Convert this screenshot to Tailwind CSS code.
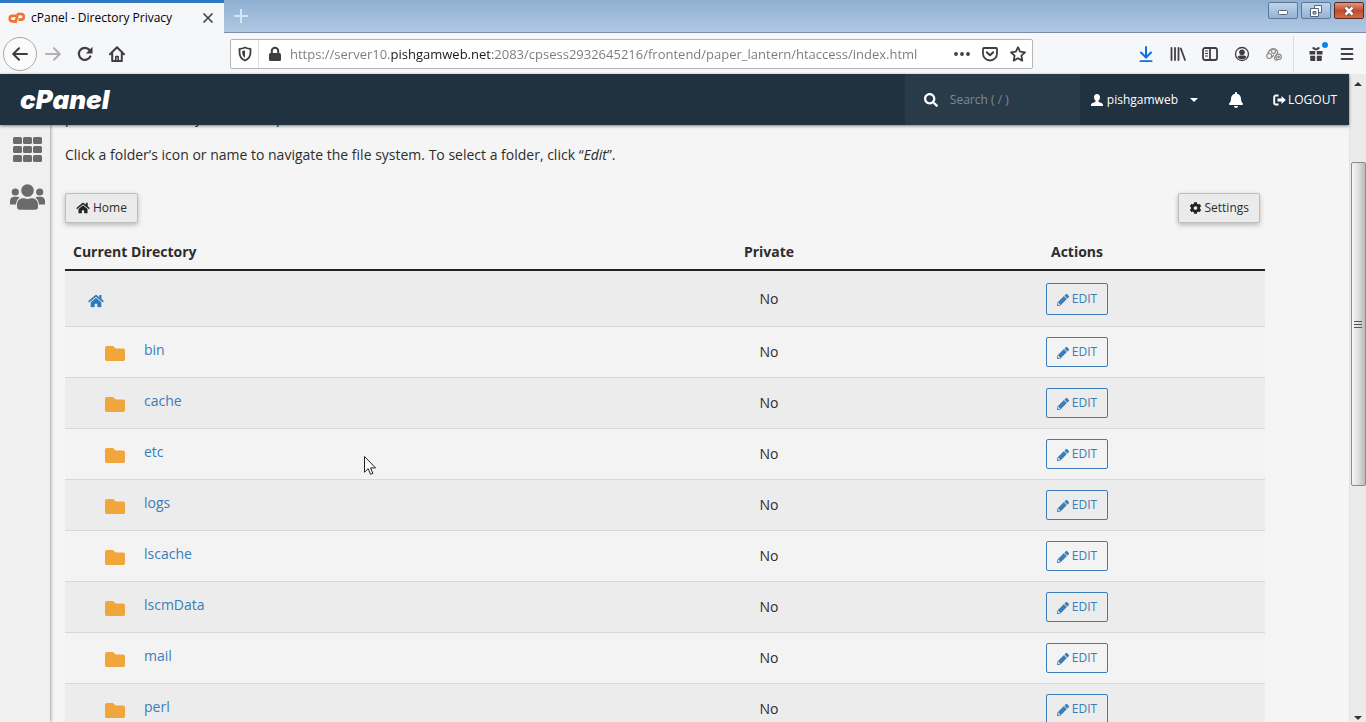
<!DOCTYPE html>
<html lang="en">
<head>
    <meta charset="utf-8">
    <title>cPanel - Directory Privacy</title>
    <script src="https://cdn.jsdelivr.net/npm/@tailwindcss/browser@4"></script>
</head>
<body class="h-screen flex flex-col overflow-hidden bg-[#f5f5f5] font-['Open_Sans',sans-serif] text-[#2d2d2d]">

    <!-- Shared icons -->
    <svg class="hidden">
        <symbol id="home" viewBox="0 0 576 512"><path d="M280.37 148.26L96 300.11V464a16 16 0 0 0 16 16l112.06-.29a16 16 0 0 0 15.92-16V368a16 16 0 0 1 16-16h64a16 16 0 0 1 16 16v95.64a16 16 0 0 0 16 16.05L464 480a16 16 0 0 0 16-16V300L295.67 148.26a12.19 12.19 0 0 0-15.3 0zM571.6 251.47L488 182.56V44.05a12 12 0 0 0-12-12h-56a12 12 0 0 0-12 12v72.61L318.47 43a48 48 0 0 0-61 0L4.34 251.47a12 12 0 0 0-1.6 16.9l25.5 31A12 12 0 0 0 45.15 301l235.22-193.74a12.19 12.19 0 0 1 15.3 0L530.9 301a12 12 0 0 0 16.9-1.6l25.5-31a12 12 0 0 0-1.7-16.93z"/></symbol>
        <symbol id="folder" viewBox="0 64 512 384"><path d="M464 128H272l-64-64H48C21.49 64 0 85.49 0 112v288c0 26.51 21.49 48 48 48h416c26.51 0 48-21.49 48-48V176c0-26.51-21.49-48-48-48z"/></symbol>
        <symbol id="pencil" viewBox="0 0 512 512"><path d="M497.9 142.1l-46.1 46.1c-4.7 4.7-12.3 4.7-17 0l-111-111c-4.7-4.7-4.7-12.3 0-17l46.1-46.1c18.7-18.7 49.1-18.7 67.9 0l60.1 60.1c18.8 18.7 18.8 49.1 0 67.9zM284.2 99.8L21.6 362.4.4 483.9c-2.9 16.4 11.4 30.6 27.8 27.8l121.5-21.3 262.6-262.6c4.7-4.7 4.7-12.3 0-17l-111-111c-4.8-4.7-12.4-4.7-17.1 0zM88 424h48v36.3l-64.5 11.3-31.1-31.1L51.7 376H88v48z"/></symbol>
    </svg>

    <!-- Window title bar -->
    <div class="h-[33px] shrink-0 flex justify-between bg-linear-to-b from-[#8fb0d0] to-[#b0c8e4] border-b border-[#7c8ea6]">
        <div class="flex items-start">
            <div class="w-56 h-[33px] flex items-center gap-1.5 px-2 border-t-3 border-[#2f78c4] bg-[#f5f6f7]">
                <svg class="w-[17px] h-3 shrink-0" viewBox="0 0 17 12" fill="none" stroke="#ee7430" stroke-width="2.600" stroke-linejoin="round"><path d="M8 3.800H4.500a2.800 2.800 0 0 0 0 5.600H7"/><path d="M7.300 11L9.800 2H13a2.800 2.800 0 0 1 0 5.600h-2.600"/></svg>
                <span class="flex-1 text-xs text-black whitespace-nowrap">cPanel - Directory Privacy</span>
                <button class="w-4 h-4 shrink-0" aria-label="Close tab"><svg class="w-4 h-4" viewBox="0 0 16 16" stroke="#444" stroke-width="1.700"><path d="M3.500 3.500l9 9M12.500 3.500l-9 9"/></svg></button>
            </div>
            <button class="w-[34px] h-8 flex items-center justify-center" aria-label="New tab"><svg class="w-4 h-4" viewBox="0 0 16 16" stroke="#d5e6f8" stroke-width="2"><path d="M8 1v14M1 8h14"/></svg></button>
        </div>
        <div class="flex gap-[3px] pr-0.5 pt-0.5">
            <button class="w-[30px] h-[17px] flex items-center justify-center rounded-xs border border-[#5c7797] bg-linear-to-b from-[#bfd4e9] to-[#94b3d4]" aria-label="Minimize"><svg class="w-3 h-3" viewBox="0 0 12 12"><rect x="1.500" y="5.500" width="9" height="4" rx="1" fill="#fff" stroke="#56657a"/></svg></button>
            <button class="w-[30px] h-[17px] flex items-center justify-center rounded-xs border border-[#5c7797] bg-linear-to-b from-[#bfd4e9] to-[#94b3d4]" aria-label="Restore"><svg class="w-3 h-3" viewBox="0 0 12 12" fill="#fff" stroke="#56657a"><path d="M4.500.5h7v7h-7z"/><path d="M.5 3.500h8v8h-8z"/><path d="M3 6.500h3v2.500H3z" fill="#9bb7d5"/></svg></button>
            <button class="w-[30px] h-[17px] flex items-center justify-center rounded-xs border border-[#5e2822] bg-linear-to-b from-[#dd9883] via-[#c4492c] to-[#cf6c47]" aria-label="Close window"><svg class="w-3 h-3" viewBox="0 0 12 12"><path d="M2.500 2.500l7 7M9.500 2.500l-7 7" stroke="#5d3a3a" stroke-width="4.200"/><path d="M2.500 2.500l7 7M9.500 2.500l-7 7" stroke="#fff" stroke-width="2.600"/></svg></button>
        </div>
    </div>

    <!-- Browser toolbar -->
    <div class="h-[41px] shrink-0 flex items-center pl-[3px] pr-1 bg-[#f6f7f8] text-[#3f3f41]">
        <button class="w-[34px] h-[34px] flex items-center justify-center rounded-full border border-[#a8a8a8] bg-[#fbfbfb]" aria-label="Back"><svg class="w-4 h-4" viewBox="0 0 16 16" fill="none" stroke="currentColor" stroke-width="2" stroke-linecap="round" stroke-linejoin="round"><path d="M15 8H1.500M7 2.200L1.200 8 7 13.800"/></svg></button>
        <button class="w-8 h-8 flex items-center justify-center text-[#b1b1b3]" aria-label="Forward"><svg class="w-4 h-4" viewBox="0 0 16 16" fill="none" stroke="currentColor" stroke-width="2" stroke-linecap="round" stroke-linejoin="round"><path d="M1 8h13.500M9 2.200L14.800 8 9 13.800"/></svg></button>
        <button class="w-8 h-8 flex items-center justify-center" aria-label="Reload"><svg class="w-4 h-4" viewBox="0 0 16 16"><path d="M13.300 10.500A6 6 0 1 1 12.500 4" fill="none" stroke="currentColor" stroke-width="2.200" stroke-linecap="round"/><path d="M15.500.8v6.700H8.800z" fill="currentColor"/></svg></button>
        <button class="w-8 h-8 flex items-center justify-center" aria-label="Home"><svg class="w-4 h-4" viewBox="0 0 16 16" fill="none" stroke="currentColor" stroke-width="2" stroke-linejoin="round" stroke-linecap="round"><path d="M1 8.200L8 1.300l7 6.900M3.200 7.500V15h9.600V7.500"/><path d="M6.800 15v-4.500h2.400V15" stroke-width="1.600"/></svg></button>

        <div class="flex-1 h-[30px] mx-[97px] flex items-center border border-[#b5b5b8] rounded-xs bg-white">
            <button class="w-7 h-7 flex items-center justify-center border-r border-[#dedede]" aria-label="Tracking protection"><svg class="w-4 h-4" viewBox="0 0 16 16"><path d="M8 1.500c2 .9 3.600 1.300 5.500 1.400v3.300c0 4-2 6.800-5.500 8.300-3.500-1.500-5.500-4.300-5.500-8.300V2.900C4.400 2.800 6 2.400 8 1.500z" fill="none" stroke="currentColor" stroke-width="1.800" stroke-linejoin="round"/><path d="M8 4.200v7.600C6.100 10.500 5.200 9 5.200 6.300V5c1-.1 1.900-.4 2.800-.8z" fill="currentColor"/></svg></button>
            <button class="w-[31px] h-7 flex items-center justify-center" aria-label="Site information"><svg class="w-4 h-4" viewBox="0 0 16 16"><rect x="2" y="7" width="12" height="8" rx="1.500" fill="currentColor"/><path d="M4.800 8V5a3.200 3.200 0 0 1 6.400 0v3" fill="none" stroke="currentColor" stroke-width="2"/></svg></button>
            <!-- the domain is darker than the rest of the address -->
            <input type="text" aria-label="Address" class="flex-1 min-w-0 h-7 text-[13px] text-transparent bg-clip-text bg-[linear-gradient(to_right,#77797c_101px,#19191b_101px,#19191b_201px,#77797c_201px)]" value="https://server10.pishgamweb.net:2083/cpsess2932645216/frontend/paper_lantern/htaccess/index.html">
            <button class="w-7 h-7 flex items-center justify-center" aria-label="Page actions"><svg class="w-4 h-4" viewBox="0 0 16 16" fill="currentColor"><circle cx="2" cy="8" r="1.900"/><circle cx="8" cy="8" r="1.900"/><circle cx="14" cy="8" r="1.900"/></svg></button>
            <button class="w-7 h-7 flex items-center justify-center" aria-label="Save to Pocket"><svg class="w-4 h-4" viewBox="0 0 16 16" fill="none" stroke="currentColor" stroke-width="1.800" stroke-linecap="round" stroke-linejoin="round"><path d="M2 2h12a1 1 0 0 1 1 1v4.500a7 7 0 0 1-14 0V3a1 1 0 0 1 1-1z"/><path d="M4.800 6.200L8 9.300l3.200-3.100" stroke-width="2"/></svg></button>
            <button class="w-7 h-7 flex items-center justify-center" aria-label="Bookmark this page"><svg class="w-4 h-4" viewBox="0 0 16 16" fill="none" stroke="currentColor" stroke-width="1.800" stroke-linejoin="round"><path d="M8 1.200l2.100 4.500 4.900.6-3.600 3.400.9 4.900L8 12.200l-4.300 2.400.9-4.900L1 6.300l4.900-.6z"/></svg></button>
        </div>

        <button class="w-8 h-8 flex items-center justify-center text-[#0a72e0]" aria-label="Downloads"><svg class="w-4 h-4" viewBox="0 0 16 16" fill="none" stroke="currentColor" stroke-width="2" stroke-linecap="round" stroke-linejoin="round"><path d="M8 1v10M3 6.500l5 5 5-5M2.500 15.200h11"/></svg></button>
        <button class="w-8 h-8 flex items-center justify-center" aria-label="Library"><svg class="w-4 h-4" viewBox="0 0 16 16" stroke="currentColor" stroke-width="1.800" stroke-linecap="round"><path d="M1.500 2v12M5 2v12M8.500 2v12M10.800 2.500L15 14"/></svg></button>
        <button class="w-8 h-8 flex items-center justify-center" aria-label="Sidebars"><svg class="w-4 h-4" viewBox="0 0 16 16" fill="none" stroke="currentColor" stroke-width="1.800"><rect x="1" y="2" width="14" height="12" rx="2"/><path d="M8 2v12"/><path d="M3 5h3M3 7.500h3M3 10h3" stroke-width="1"/></svg></button>
        <button class="w-8 h-8 flex items-center justify-center" aria-label="Account"><svg class="w-4 h-4" viewBox="0 0 16 16"><circle cx="8" cy="8" r="6.500" fill="none" stroke="currentColor" stroke-width="1.300"/><circle cx="8" cy="6.200" r="2.800" fill="currentColor"/><path d="M3.500 11c1-1.700 2.500-1.500 4.500-1.500s3.500-.2 4.500 1.500A5.300 5.300 0 0 1 8 13.300 5.300 5.300 0 0 1 3.500 11z" fill="currentColor"/></svg></button>
        <button class="w-8 h-8 flex items-center justify-center text-[#8b8b8b]" aria-label="Extension"><svg class="w-4 h-4" viewBox="0 0 16 16" fill="none" stroke="currentColor" stroke-width="1.200"><circle cx="3.200" cy="10" r="2.500"/><circle cx="12.600" cy="10.800" r="2.700"/><circle cx="7.500" cy="5.500" r="2"/><path d="M1.500 8C3 4.500 5 2.500 7.500 2.500S12 5 11.500 7s-3 3-3 5 2 2.500 3 2M5.500 11.500L8 9"/><circle cx="12.600" cy="10.800" r=".8"/></svg></button>
        <div class="w-px h-9 ml-[3px] mr-1.5 bg-[#dcdcdc]"></div>
        <button class="relative w-8 h-8 flex items-center justify-center" aria-label="What's new">
            <svg class="w-4 h-4" viewBox="0 0 16 16" fill="currentColor"><path d="M1.500 5h5.700v3.500H1.500zM8.800 5h5.700v3.500H8.800zM2.200 9.800h5V15h-4a1 1 0 0 1-1-1zM8.800 9.800h5V14a1 1 0 0 1-1 1h-4zM8 4.500L4.500 3V1.200h2L8 2.700l1.500-1.500h2V3z"/></svg>
            <span class="absolute top-1 right-1 w-1.5 h-1.5 rounded-full bg-[#0a84e8]"></span>
        </button>
        <button class="w-[30px] h-8 flex items-center justify-center" aria-label="Menu"><svg class="w-4 h-4" viewBox="0 0 16 16" stroke="currentColor" stroke-width="1.800" stroke-linecap="round"><path d="M2.500 3h11M2.500 8h11M2.500 13h11"/></svg></button>
    </div>

    <div class="flex-1 min-h-0 flex">
        <div class="flex-1 min-w-0 flex flex-col">
            <!-- cPanel header -->
            <header class="relative z-10 h-[51px] shrink-0 flex items-center bg-[#203140] text-white text-xs shadow-[0_1px_3px_rgba(0,0,0,0.5)]">
                <a href="#" class="ml-5 font-['Inter',sans-serif] font-black italic text-[26px] leading-6">cPanel</a>
                <label class="ml-auto w-[175px] h-full flex items-center gap-3 pl-[19px] bg-[#293a48]">
                    <svg class="w-[14px] h-[14px] shrink-0" viewBox="0 0 512 512" fill="currentColor"><path d="M505 442.700L405.300 343c-4.500-4.500-10.600-7-17-7H372c27.600-35.300 44-79.700 44-128C416 93.100 322.900 0 208 0S0 93.100 0 208s93.100 208 208 208c48.300 0 92.700-16.400 128-44v16.300c0 6.400 2.500 12.500 7 17l99.700 99.700c9.400 9.400 24.600 9.400 33.900 0l28.300-28.300c9.400-9.400 9.400-24.600.1-34zM208 336c-70.700 0-128-57.200-128-128 0-70.700 57.200-128 128-128 70.700 0 128 57.200 128 128 0 70.700-57.200 128-128 128z"/></svg>
                    <input type="text" aria-label="Search" placeholder="Search ( / )" class="w-full min-w-0 placeholder:text-[#7e8b96]">
                </label>
                <button class="flex items-center ml-[11px]">
                    <svg class="w-3 h-3 mr-1" viewBox="0 0 12 12" fill="currentColor"><path d="M6 0c1.900 0 3 1.300 3 3.200 0 1.500-.6 2.700-1.500 3.400v1.100c.6.600 4.500 1.200 4.500 3V12H0v-1.300c0-1.800 3.900-2.400 4.500-3V6.600C3.600 5.900 3 4.700 3 3.200 3 1.300 4.100 0 6 0z"/></svg>
                    pishgamweb
                    <svg class="w-2 h-1 ml-3" viewBox="0 0 8 4" fill="currentColor"><path d="M0 0h8L4 4z"/></svg>
                </button>
                <button class="ml-[30px]" aria-label="Notifications"><svg class="w-4 h-4" viewBox="-32 0 512 512" fill="currentColor"><path d="M224 512c35.320 0 63.970-28.650 63.970-64H160.030c0 35.350 28.650 64 63.970 64zm215.390-149.710c-19.320-20.760-55.470-51.990-55.470-154.290 0-77.700-54.480-139.900-127.940-155.160V32c0-17.670-14.320-32-31.980-32s-31.980 14.330-31.980 32v20.840C118.560 68.100 64.080 130.300 64.080 208c0 102.300-36.150 133.530-55.470 154.290-6 6.450-8.660 14.160-8.610 21.710.11 16.400 12.980 32 32.100 32h383.800c19.120 0 32-15.600 32.100-32 .05-7.550-2.610-15.270-8.610-21.710z"/></svg></button>
                <a href="#" class="flex items-center ml-[29px] mr-3">
                    <svg class="w-[13px] h-3 mr-0.5" viewBox="0 0 13 12"><path d="M5.500 1.500H3A1.800 1.800 0 0 0 1.200 3.300v5.400A1.800 1.800 0 0 0 3 10.500h2.500" fill="none" stroke="currentColor" stroke-width="1.900"/><path d="M4.500 4.500h4V2l4.300 4-4.300 4V7.500h-4z" fill="currentColor"/></svg>
                    LOGOUT
                </a>
            </header>

            <div class="flex-1 min-h-0 flex">
                <nav class="relative w-[50px] shrink-0 flex flex-col items-center pt-3 bg-[#f0f0f0] text-[#6b6b6b] shadow-[1px_0_3px_rgba(0,0,0,0.35)]">
                    <a href="#" class="ml-1" aria-label="Home"><svg class="w-[29px] h-[25px]" viewBox="0 0 29 25" fill="currentColor"><rect width="9" height="7" rx="1.500"/><rect x="10" width="9" height="7" rx="1.500"/><rect x="20" width="9" height="7" rx="1.500"/><rect y="9" width="9" height="7" rx="1.500"/><rect x="10" y="9" width="9" height="7" rx="1.500"/><rect x="20" y="9" width="9" height="7" rx="1.500"/><rect y="18" width="9" height="7" rx="1.500"/><rect x="10" y="18" width="9" height="7" rx="1.500"/><rect x="20" y="18" width="9" height="7" rx="1.500"/></svg></a>
                    <a href="#" class="ml-1 mt-[22px]" aria-label="User Manager"><svg class="w-[35px] h-[26px]" viewBox="0 0 35 26" fill="currentColor"><circle cx="5.300" cy="8" r="3.600"/><circle cx="29.700" cy="8" r="3.600"/><circle cx="17.500" cy="6.500" r="6.300"/><path d="M0 20.500V17c0-2.700 1.800-4.300 4-4.300h3.200c1 0 1.900.3 2.600.9-2.400 1.500-3.500 3.800-3.800 6.900zM35 20.500V17c0-2.700-1.800-4.300-4-4.300h-3.200c-1 0-1.900.3-2.600.9 2.400 1.500 3.500 3.800 3.800 6.900z"/><path d="M7 23v-2.500c0-4 2.500-6.300 6-6.300 1.600 0 2.300.7 4.500.7s2.900-.7 4.500-.7c3.500 0 6 2.300 6 6.300V23c0 1.700-1.100 2.800-2.800 2.800H9.800C8.100 25.800 7 24.700 7 23z"/></svg></a>
                </nav>

                <main class="flex-1 min-w-0 overflow-hidden pl-[15px] text-sm">
                    <div class="max-w-[1200px]">
                        <p class="-mt-[17px]">password to access your files or path.</p>
                        <p class="mt-[17px]">Click a folder’s icon or name to navigate the file system. To select a folder, click “<em>Edit</em>”.</p>
                        <div class="mt-7 flex justify-between pr-[5px] text-xs">
                            <button class="h-[30px] flex items-center gap-[3px] px-2.5 rounded-xs border border-[#bdbdbd] bg-[#ebebeb] shadow-[0_2px_5px_rgba(0,0,0,0.25)]"><svg class="w-[14px] h-3" fill="#222"><use href="#home"/></svg>Home</button>
                            <button class="h-[30px] flex items-center gap-[3px] px-2.5 rounded-xs border border-[#bdbdbd] bg-[#ebebeb] shadow-[0_2px_5px_rgba(0,0,0,0.25)]"><svg class="w-[13px] h-3" viewBox="0 0 512 512" fill="#222"><path d="M487.400 315.700l-42.600-24.600c4.300-23.200 4.300-47 0-70.200l42.600-24.600c4.900-2.800 7.100-8.600 5.500-14-11.100-35.600-30-67.800-54.700-94.600-3.800-4.100-10-5.100-14.800-2.300L380.800 110c-17.900-15.400-38.500-27.300-60.800-35.100V25.800c0-5.600-3.900-10.500-9.400-11.700-36.700-8.200-74.300-7.800-109.200 0-5.500 1.200-9.400 6.100-9.400 11.700V75c-22.200 7.900-42.800 19.800-60.800 35.100L88.700 85.500c-4.900-2.800-11-1.900-14.800 2.300-24.700 26.700-43.600 58.900-54.700 94.600-1.700 5.400.6 11.200 5.500 14L67.300 221c-4.300 23.200-4.300 47 0 70.200l-42.600 24.600c-4.900 2.800-7.100 8.600-5.500 14 11.100 35.600 30 67.800 54.700 94.600 3.800 4.100 10 5.100 14.800 2.300l42.600-24.600c17.900 15.400 38.500 27.300 60.800 35.100v49.200c0 5.600 3.900 10.500 9.400 11.700 36.700 8.200 74.300 7.800 109.200 0 5.500-1.200 9.400-6.100 9.400-11.700v-49.200c22.200-7.900 42.800-19.800 60.800-35.100l42.600 24.600c4.900 2.800 11 1.900 14.800-2.300 24.700-26.700 43.600-58.900 54.700-94.600 1.500-5.500-.7-11.300-5.600-14.100zM256 336c-44.100 0-80-35.900-80-80s35.900-80 80-80 80 35.900 80 80-35.900 80-80 80z"/></svg>Settings</button>
                        </div>

                        <table class="mt-[11px] w-full table-fixed border-separate border-spacing-0">
                            <thead>
                                <tr>
                                    <th class="border-b-2 border-[#222] pt-2 pb-[7px] pl-2 text-left">Current Directory</th>
                                    <th class="w-[240px] border-b-2 border-[#222] pt-2 pb-[7px]">Private</th>
                                    <th class="w-[376px] border-b-2 border-[#222] pt-2 pb-[7px]">Actions</th>
                                </tr>
                            </thead>
                            <tbody id="directories">
                                <tr class="h-14 bg-[#ececec]">
                                    <td class="border-b border-[#d8d8d8] pl-[23px] pt-1"><a href="#" aria-label="Home directory"><svg class="w-4 h-[14px]" fill="#3079b8"><use href="#home"/></svg></a></td>
                                    <td class="border-b border-[#d8d8d8] text-center">No</td>
                                    <td class="border-b border-[#d8d8d8]"><button class="mx-auto w-[62px] h-8 flex items-center justify-center gap-[3px] rounded-xs border border-[#3a7db8] text-xs text-[#3a7db8]"><svg class="w-3 h-3 mt-0.5" fill="currentColor"><use href="#pencil"/></svg>EDIT</button></td>
                                </tr>
                            </tbody>
                        </table>
                    </div>
                </main>
            </div>
        </div>

        <!-- Page scrollbar -->
        <div class="w-[17px] shrink-0 flex flex-col items-center bg-[#ebebeb] border-l border-[#e2e2e2]">
            <svg class="w-2 h-1 mt-2" viewBox="0 0 8 4" fill="#333"><path d="M4 0l4 4H0z"/></svg>
            <div class="w-[15px] h-1/2 mt-[76px] flex items-center justify-center rounded-xs border border-[#8a8a8a] bg-linear-to-r from-[#f6f6f6] via-[#dedede] to-[#b8babd]">
                <svg class="w-2 h-2" viewBox="0 0 8 8" stroke="#555"><path d="M0 1.500h8M0 4.500h8M0 7.500h8"/></svg>
            </div>
            <svg class="w-2 h-1 mt-auto mb-0.5" viewBox="0 0 8 4" fill="#333"><path d="M0 0h8L4 4z"/></svg>
        </div>
    </div>

    <!-- Mouse pointer -->
    <svg class="absolute left-[364px] top-[456px] w-3 h-[19px]" viewBox="0 0 12 19"><path d="M.5.5v15.700l3.700-3.500 2.400 5.600 2.300-1-2.400-5.400h5z" fill="#fff" stroke="#222"/></svg>

    <script>
        const folders = ['bin', 'cache', 'etc', 'logs', 'lscache', 'lscmData', 'mail', 'perl'];

        document.getElementById('directories').innerHTML += folders.map(name => `
            <tr class="h-[51px] even:bg-[#f3f3f3] odd:bg-[#ececec]">
                <td class="border-b border-[#d8d8d8] pl-10 pb-1">
                    <a href="#" class="flex items-center gap-[19px] text-[#3a7db8]"><svg class="w-5 h-[15px] mt-1.5" fill="#f0a63a"><use href="#folder"/></svg>${name}</a>
                </td>
                <td class="border-b border-[#d8d8d8] text-center">No</td>
                <td class="border-b border-[#d8d8d8]"><button class="mx-auto w-[62px] h-[30px] flex items-center justify-center gap-[3px] rounded-xs border border-[#3a7db8] text-xs text-[#3a7db8]"><svg class="w-3 h-3 mt-0.5" fill="currentColor"><use href="#pencil"/></svg>EDIT</button></td>
            </tr>`).join('');
    </script>
</body>
</html>
